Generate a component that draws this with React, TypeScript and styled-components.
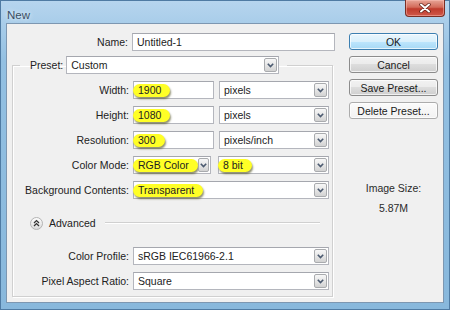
import React from 'react'
import styled, { createGlobalStyle } from 'styled-components'

const GlobalStyle = createGlobalStyle`
  html, body {
    margin: 0;
    padding: 0;
    background: #fff;
  }
  body {
    font-family: 'Liberation Sans', Arial, sans-serif;
    font-size: 10.5px;
    color: #222;
  }
`

const Window = styled.div`
  width: 450px;
  height: 310px;
  box-sizing: border-box;
  display: flex;
  flex-direction: column;
  padding: 0 5px 6px 5px;
  border: 1px solid #4f7ba3;
  background: linear-gradient(#b6d5ee, #93c0e2 60px, #88b8dc);
`

const TitleBar = styled.div`
  height: 22px;
  display: flex;
  align-items: flex-start;
  justify-content: space-between;
`

const Title = styled.span`
  margin: 8px 0 0 1px;
  font-size: 11.5px;
  color: #3a4e63;
  text-shadow: 0 0 5px rgba(255, 255, 255, 0.95);
`

const CloseButton = styled.div`
  width: 40px;
  height: 17px;
  margin: -1px -1px 0 0;
  box-sizing: border-box;
  border: 1px solid #7a2e24;
  border-top: none;
  border-radius: 0 0 4px 4px;
  background: linear-gradient(#e7a597, #d36b5a 45%, #bf3b2c 55%, #d0584a);
  box-shadow: inset 0 0 0 1px rgba(255, 200, 190, 0.45);
  display: flex;
  align-items: center;
  justify-content: center;
`

const Client = styled.div`
  flex: 1;
  display: flex;
  gap: 14px;
  padding: 9px 5px 0 5px;
  border: 1px solid #7d97b1;
  background: #f0f0f0;
`

const LeftCol = styled.div`
  width: 323px;
  display: flex;
  flex-direction: column;
`

const RightCol = styled.div`
  width: 89px;
  display: flex;
  flex-direction: column;
  gap: 6px;
`

const FormRow = styled.div`
  display: grid;
  grid-template-columns: 116px 1fr;
  column-gap: 4px;
  align-items: center;
`

const Label = styled.span`
  text-align: right;
  white-space: nowrap;
`

const TextBox = styled.div<{ $w: number }>`
  width: ${({ $w }) => $w}px;
  height: 18px;
  box-sizing: border-box;
  border: 1px solid #b4b6bd;
  border-top-color: #a5a7ae;
  background: #fff;
  display: flex;
  align-items: center;
  padding-left: 4px;
  white-space: nowrap;
`

const Select = styled(TextBox)`
  padding-right: 1px;
`

const ArrowBox = styled.span`
  margin-left: auto;
  width: 13px;
  height: 14px;
  box-sizing: border-box;
  border: 1px solid #a9abae;
  border-radius: 2px;
  background: linear-gradient(#f7f7f7, #e6e6e6 50%, #d2d2d2);
  display: flex;
  align-items: center;
  justify-content: center;
`

const Highlight = styled.span`
  display: inline-flex;
  align-items: center;
  height: 13px;
  margin-left: -5px;
  padding: 0 9px 0 5px;
  border-radius: 7px;
  background: #ffff26;
  box-shadow: 1px 2px 2px rgba(70, 70, 20, 0.6);
`

const GroupBox = styled.fieldset`
  margin: 5px 2px 0 0;
  padding: 7px 0 6px 0;
  min-width: 0;
  border: 1px solid #d0d0d0;
  box-shadow: inset 1px 1px 0 #fff, 1px 1px 0 #fff;
  display: flex;
  flex-direction: column;
  gap: 7px;
`

const Legend = styled.legend`
  margin-left: 7px;
  padding: 0 8px 0 10px;
  display: flex;
  align-items: center;
  gap: 3px;
`

const FieldPair = styled.div<{ $gap: number }>`
  display: flex;
  gap: ${({ $gap }) => $gap}px;
`

const AdvancedRow = styled.div`
  height: 14px;
  margin: 10px 12px 10px 17px;
  display: flex;
  align-items: center;
  gap: 6px;
`

const Rule = styled.span`
  flex: 1;
  height: 0;
  border-top: 1px solid #d0d0d0;
  border-bottom: 1px solid #fff;
  margin-left: 3px;
`

const Button = styled.div<{ $default?: boolean; $flat?: boolean }>`
  height: 17px;
  box-sizing: border-box;
  display: flex;
  align-items: center;
  justify-content: center;
  border: 1px solid ${({ $default, $flat }) => ($default ? '#3c7fb1' : $flat ? '#acacac' : '#8c8c8c')};
  border-radius: 3px;
  background: ${({ $default, $flat }) =>
    $default
      ? 'linear-gradient(#eaf6fd, #d9f0fc 50%, #bee6fd 50%, #a7d9f5)'
      : $flat
      ? 'linear-gradient(#fbfbfb, #f2f2f2)'
      : 'linear-gradient(#f2f2f2, #ebebeb 50%, #dddddd 50%, #cfcfcf)'};
  box-shadow: inset 0 0 0 1px rgba(255, 255, 255, 0.7);
  color: #1a1a1a;
`

const SizeInfo = styled.div`
  margin-top: 56px;
  display: flex;
  flex-direction: column;
  align-items: center;
  gap: 6px;
  line-height: 14px;
  color: #2a2a2a;
`

function Chevron() {
  return (
    <svg width="7" height="5" viewBox="0 0 7 5">
      <path d="M0.8 0.8 L3.5 3.6 L6.2 0.8" fill="none" stroke="#4b5a70" strokeWidth="1.6" />
    </svg>
  )
}

function Dropdown({ w, children }: { w: number; children?: React.ReactNode }) {
  return (
    <Select $w={w}>
      {children}
      <ArrowBox>
        <Chevron />
      </ArrowBox>
    </Select>
  )
}

function AdvancedIcon() {
  return (
    <svg width="13" height="13" viewBox="0 0 13 13">
      <defs>
        <linearGradient id="adv" x1="0" y1="0" x2="0" y2="1">
          <stop offset="0" stopColor="#ffffff" />
          <stop offset="1" stopColor="#d8d8d8" />
        </linearGradient>
      </defs>
      <circle cx="6.5" cy="6.5" r="6" fill="url(#adv)" stroke="#b3b3b3" />
      <path d="M4 6 L6.5 3.6 L9 6 M4 9 L6.5 6.6 L9 9" fill="none" stroke="#333" strokeWidth="1.3" />
    </svg>
  )
}

export default function App() {
  return (
    <>
      <GlobalStyle />
      <Window>
        <TitleBar>
          <Title>New</Title>
          <CloseButton>
            <svg width="12" height="10" viewBox="0 0 12 10">
              <path d="M2 1.5 L10 8.5 M10 1.5 L2 8.5" stroke="#5a1c14" strokeWidth="3.4" strokeLinecap="round" />
              <path d="M2 1.5 L10 8.5 M10 1.5 L2 8.5" stroke="#fff" strokeWidth="2" strokeLinecap="round" />
            </svg>
          </CloseButton>
        </TitleBar>
        <Client>
          <LeftCol>
            <FormRow>
              <Label>Name:</Label>
              <TextBox $w={203}>Untitled-1</TextBox>
            </FormRow>
            <GroupBox>
              <Legend>
                <Label>Preset:</Label>
                <Dropdown w={213}>Custom</Dropdown>
              </Legend>
              <FormRow>
                <Label>Width:</Label>
                <FieldPair $gap={5}>
                  <TextBox $w={81}>
                    <Highlight>1900</Highlight>
                  </TextBox>
                  <Dropdown w={110}>pixels</Dropdown>
                </FieldPair>
              </FormRow>
              <FormRow>
                <Label>Height:</Label>
                <FieldPair $gap={5}>
                  <TextBox $w={81}>
                    <Highlight>1080</Highlight>
                  </TextBox>
                  <Dropdown w={110}>pixels</Dropdown>
                </FieldPair>
              </FormRow>
              <FormRow>
                <Label>Resolution:</Label>
                <FieldPair $gap={5}>
                  <TextBox $w={81}>
                    <Highlight>300</Highlight>
                  </TextBox>
                  <Dropdown w={110}>pixels/inch</Dropdown>
                </FieldPair>
              </FormRow>
              <FormRow>
                <Label>Color Mode:</Label>
                <FieldPair $gap={7}>
                  <Dropdown w={78}>
                    <Highlight>RGB Color</Highlight>
                  </Dropdown>
                  <Dropdown w={111}>
                    <Highlight>8 bit</Highlight>
                  </Dropdown>
                </FieldPair>
              </FormRow>
              <FormRow>
                <Label>Background Contents:</Label>
                <Dropdown w={196}>
                  <Highlight>Transparent</Highlight>
                </Dropdown>
              </FormRow>
              <AdvancedRow>
                <AdvancedIcon />
                <span>Advanced</span>
                <Rule />
              </AdvancedRow>
              <FormRow>
                <Label>Color Profile:</Label>
                <Dropdown w={196}>sRGB IEC61966-2.1</Dropdown>
              </FormRow>
              <FormRow>
                <Label>Pixel Aspect Ratio:</Label>
                <Dropdown w={196}>Square</Dropdown>
              </FormRow>
            </GroupBox>
          </LeftCol>
          <RightCol>
            <Button $default>OK</Button>
            <Button>Cancel</Button>
            <Button>Save Preset...</Button>
            <Button $flat>Delete Preset...</Button>
            <SizeInfo>
              <span>Image Size:</span>
              <span>5.87M</span>
            </SizeInfo>
          </RightCol>
        </Client>
      </Window>
    </>
  )
}
